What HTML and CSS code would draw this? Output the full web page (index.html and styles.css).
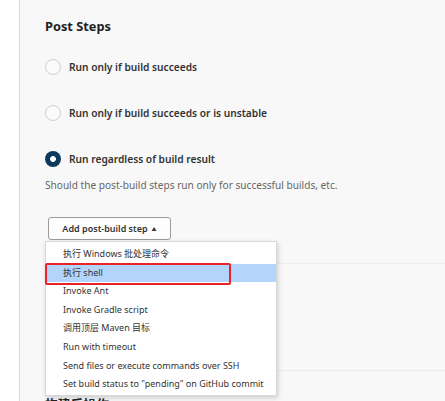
FILE: index.html
```html
<!DOCTYPE html>
<html>
<head>
<meta charset="utf-8">
<link rel="stylesheet" href="styles.css">
</head>
<body>
<div class="page">
  <div class="panel">
    <h2 class="title">Post Steps</h2>
    <div class="radios">
      <label class="radio-row"><span class="radio"></span><span class="radio-label">Run only if build succeeds</span></label>
      <label class="radio-row"><span class="radio"></span><span class="radio-label">Run only if build succeeds or is unstable</span></label>
      <label class="radio-row"><span class="radio checked"></span><span class="radio-label">Run regardless of build result</span></label>
    </div>
    <p class="desc">Should the post-build steps run only for successful builds, etc.</p>
    <div class="btn-wrap">
      <button class="btn">Add post-build step <span class="caret">&#9650;</span></button>
      <ul class="menu">
        <li class="item">执行 Windows 批处理命令</li>
        <li class="item active">执行 shell<span class="mark"></span></li>
        <li class="item">Invoke Ant</li>
        <li class="item">Invoke Gradle script</li>
        <li class="item">调用顶层 Maven 目标</li>
        <li class="item">Run with timeout</li>
        <li class="item">Send files or execute commands over SSH</li>
        <li class="item">Set build status to "pending" on GitHub commit</li>
      </ul>
    </div>
    <div class="under">
      <div class="under-row short"></div>
      <div class="under-row tall"></div>
    </div>
    <h2 class="title next">构建后操作</h2>
  </div>
</div>
</body>
</html>
```
FILE: styles.css
```css
* { box-sizing: border-box; }
html, body { margin: 0; padding: 0; background: #fff; }
body {
  font-family: "Noto Sans", "Noto Sans CJK SC", sans-serif;
  color: #333;
  overflow: hidden;
  height: 401px;
}
.page {
  margin-left: 19px;
  border-left: 1px solid #dcdcdc;
  background: #f8f8f8;
  height: 401px;
}
.panel {
  padding: 16px 0 0 25px;
  display: flex;
  flex-direction: column;
}
.title {
  margin: 0;
  font-size: 12.8px;
  line-height: 20px;
  font-weight: 700;
  color: #222;
}
.radios {
  margin-top: 23px;
  display: flex;
  flex-direction: column;
  gap: 30px;
}
.radio-row {
  display: flex;
  align-items: center;
  gap: 8px;
  height: 16px;
}
.radio {
  width: 16px;
  height: 16px;
  border-radius: 50%;
  border: 1.6px solid #cfcfcf;
  background: #fbfbfb;
  flex: none;
}
.radio.checked {
  border: none;
  background: radial-gradient(circle, #fff 0 2.6px, #0d3a5c 3.2px);
}
.radio-label {
  font-size: 10.2px;
  font-weight: 600;
  color: #333;
  line-height: 16px;
}
.desc {
  margin: 10px 0 0;
  font-size: 10.1px;
  line-height: 16px;
  color: #666;
}
.btn-wrap {
  position: relative;
  margin-top: 24px;
  align-self: flex-start;
}
.btn {
  margin-left: 3px;
  height: 23px;
  width: 123px;
  padding: 0;
  border: 1px solid #9b9b9b;
  border-radius: 3px;
  background: #fdfdfd;
  font-family: inherit;
  font-size: 9px;
  font-weight: 600;
  color: #333;
  display: flex;
  align-items: center;
  justify-content: center;
  gap: 4px;
}
.caret { font-size: 5px; }
.menu {
  position: absolute;
  z-index: 2;
  top: 24px;
  left: 0;
  width: 232px;
  margin: 0;
  padding: 3px 0 1px;
  list-style: none;
  background: #fff;
  border: 1px solid #d8d8d8;
  box-shadow: 1px 2px 5px rgba(0,0,0,0.18);
}
.item {
  position: relative;
  height: 18.6px;
  line-height: 18.6px;
  padding-left: 17px;
  font-size: 9px;
  color: #333;
  white-space: nowrap;
}
.item.active { background: #b4d5fb; }
.mark {
  position: absolute;
  left: -1px;
  top: -1px;
  width: 186px;
  height: 22px;
  border: 2px solid #e8232a;
  border-radius: 2px;
}
.under {
  display: flex;
  flex-direction: column;
}
.under-row { border-bottom: 1px solid #ececec; }
.under-row.short { height: 24px; }
.under-row.tall { height: 107px; }
.title.next { margin-top: 23px; }
```
